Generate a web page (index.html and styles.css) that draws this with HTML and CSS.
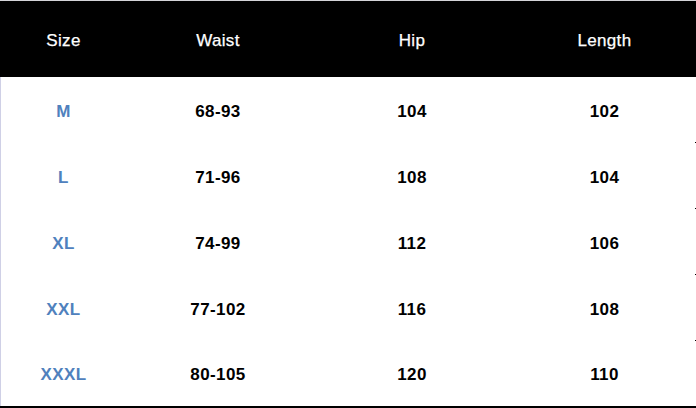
FILE: index.html
```html
<!DOCTYPE html>
<html>
<head>
<meta charset="utf-8">
<link rel="stylesheet" href="styles.css">
</head>
<body>
<div class="chart">
  <div class="row head">
    <div class="cell">Size</div>
    <div class="cell">Waist</div>
    <div class="cell">Hip</div>
    <div class="cell">Length</div>
    <div class="tick"></div>
  </div>
  <div class="row">
    <div class="cell size">M</div>
    <div class="cell">68-93</div>
    <div class="cell">104</div>
    <div class="cell">102</div>
    <div class="tick"></div>
  </div>
  <div class="row">
    <div class="cell size">L</div>
    <div class="cell">71-96</div>
    <div class="cell">108</div>
    <div class="cell">104</div>
    <div class="tick"></div>
  </div>
  <div class="row">
    <div class="cell size">XL</div>
    <div class="cell">74-99</div>
    <div class="cell">112</div>
    <div class="cell">106</div>
    <div class="tick"></div>
  </div>
  <div class="row">
    <div class="cell size">XXL</div>
    <div class="cell">77-102</div>
    <div class="cell">116</div>
    <div class="cell">108</div>
    <div class="tick"></div>
  </div>
  <div class="row last">
    <div class="cell size">XXXL</div>
    <div class="cell">80-105</div>
    <div class="cell">120</div>
    <div class="cell">110</div>
    <div class="tick"></div>
  </div>
</div>
</body>
</html>
```
FILE: styles.css
```css
html, body {
  margin: 0;
  padding: 0;
  background: #ffffff;
}
.chart {
  width: 696px;
  height: 408px;
  box-sizing: border-box;
  border-top: 1px solid #d4d4d8;
  border-bottom: 2px solid #000000;
  font-family: "Liberation Sans", Arial, sans-serif;
  display: flex;
  flex-direction: column;
}
.row {
  display: grid;
  grid-template-columns: 125px 184px 204px 181px 2px;
  height: 66px;
  align-items: center;
  border-left: 1px solid #cfd0e6;
}
.row.head {
  height: 76px;
  background: #000000;
  border-left-color: #000000;
}
.row.last {
  flex: 1;
}
.cell {
  text-align: center;
  font-size: 17px;
  letter-spacing: 0.4px;
  font-weight: bold;
  color: #000000;
  padding-top: 3px;
}
.head .cell {
  color: #ffffff;
  font-weight: normal;
  font-size: 17px;
  letter-spacing: 0.3px;
  -webkit-text-stroke: 0.25px #ffffff;
}
.cell.size {
  color: #4f81bd;
}
.tick {
  align-self: stretch;
  border-bottom: 1px solid #000000;
}
.head .tick {
  border-bottom: none;
}
.last .tick {
  border-bottom: none;
}
```
